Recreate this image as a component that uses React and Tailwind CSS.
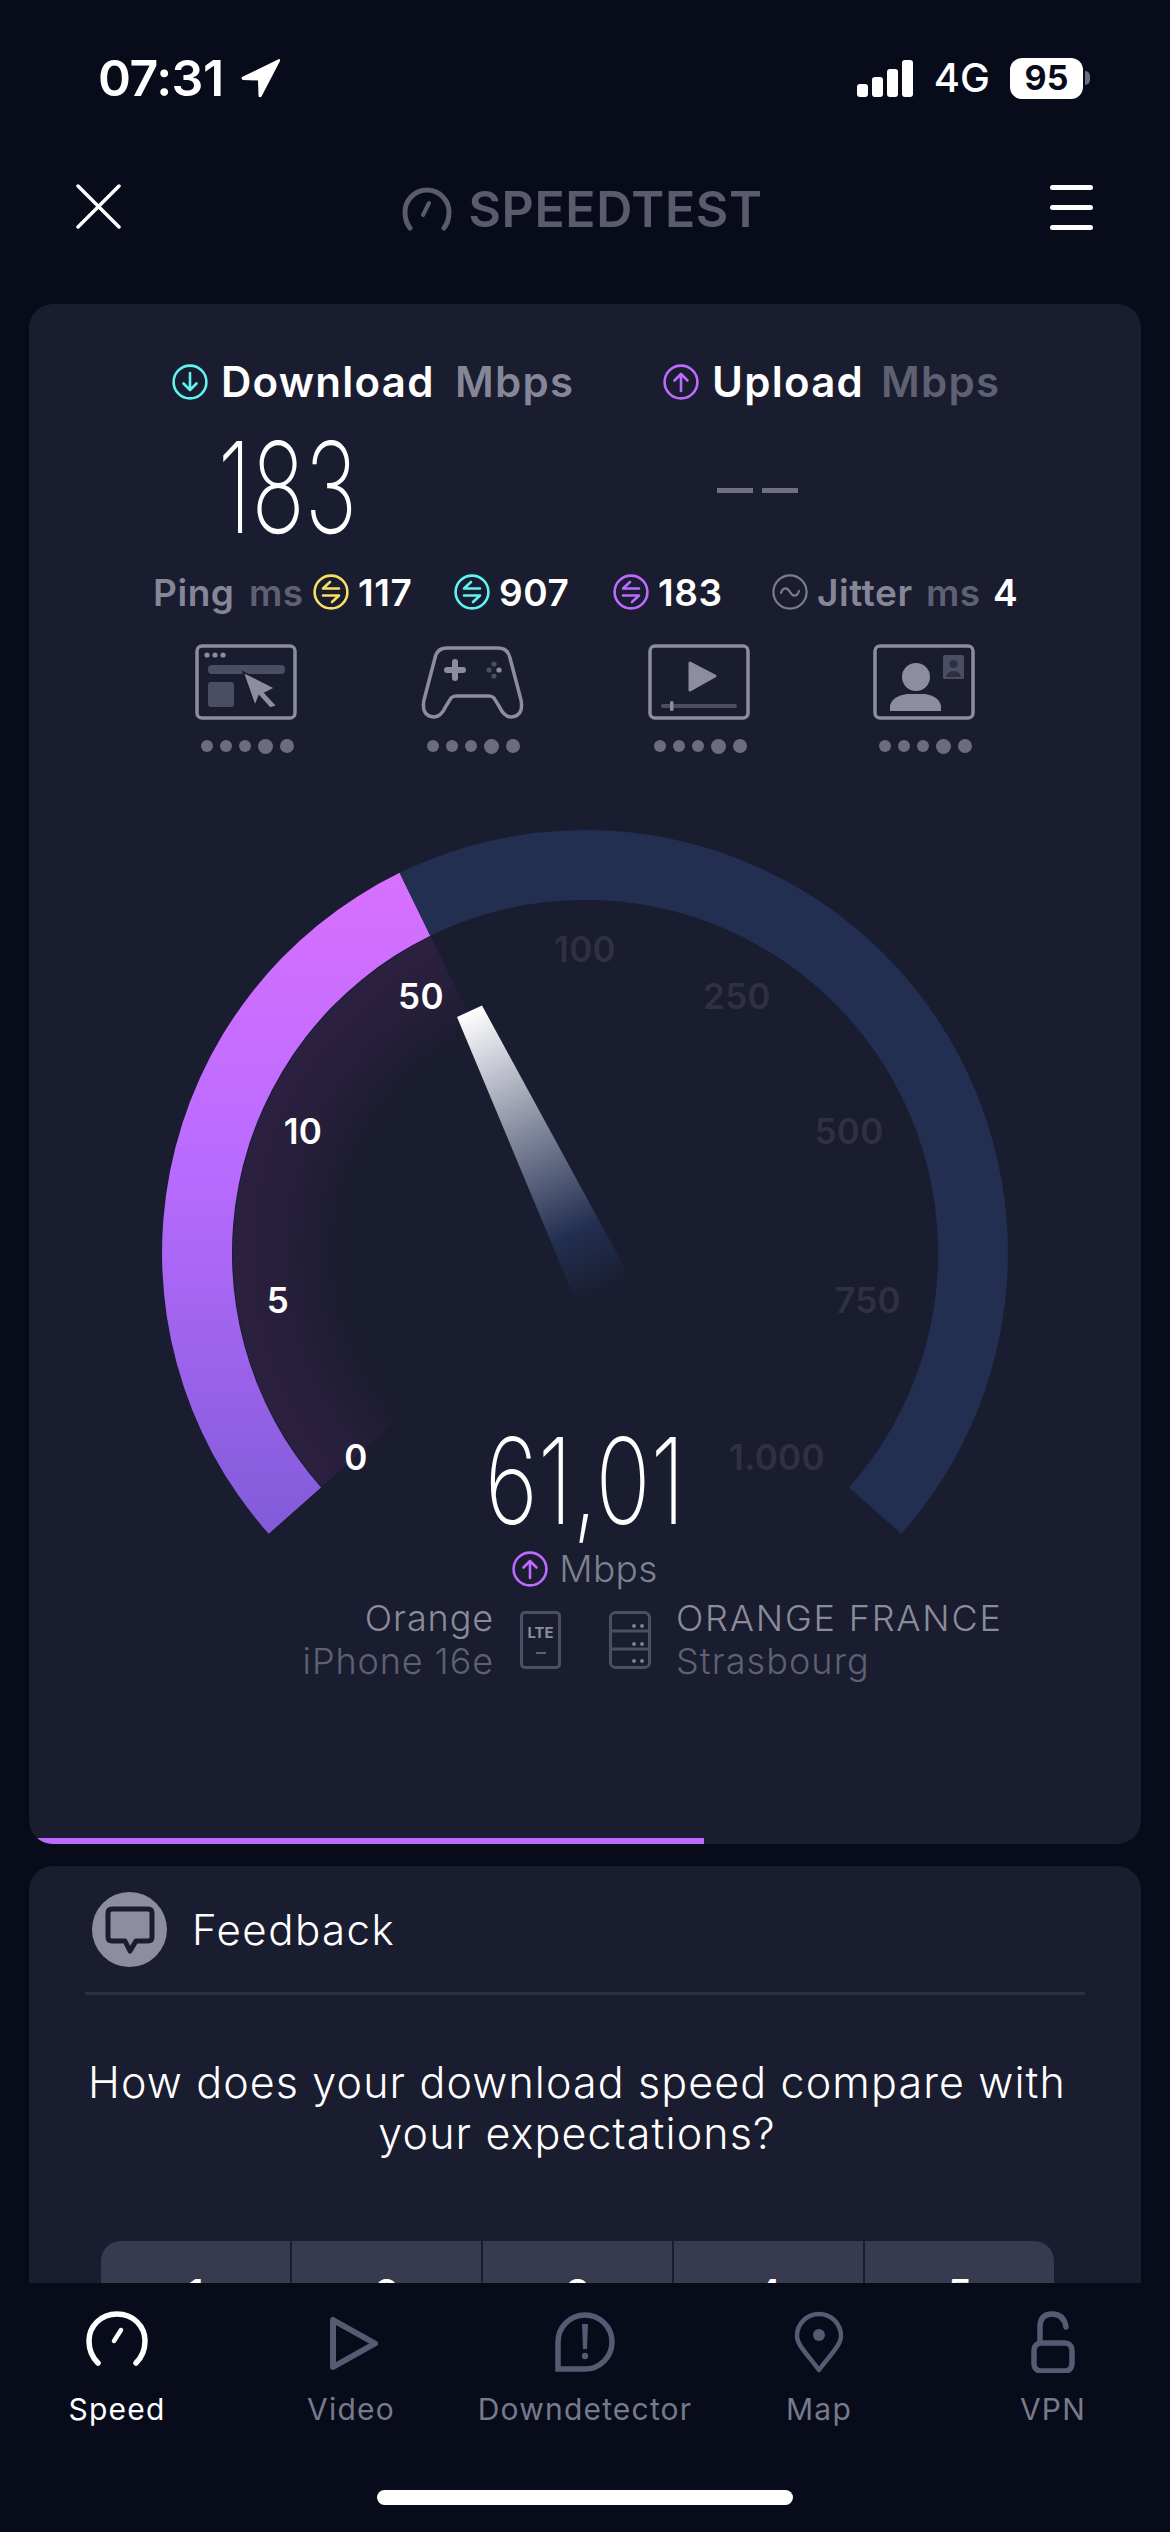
import React from "react";

const CX = 556;
const CY = 453;

function polar(r, deg) {
  const a = (deg * Math.PI) / 180;
  return `${(CX + r * Math.sin(a)).toFixed(1)} ${(CY - r * Math.cos(a)).toFixed(1)}`;
}

function band(r1, r2, from, to) {
  return `M${polar(r1, from)} A${r1} ${r1} 0 0 1 ${polar(r1, to)} L${polar(r2, to)} A${r2} ${r2} 0 0 0 ${polar(r2, from)} Z`;
}

function ArrowCircle({ color, up, size = 36 }) {
  return (
    <svg width={size} height={size} viewBox="0 0 36 36" fill="none" stroke={color} strokeWidth="2.6" className="shrink-0">
      <circle cx="18" cy="18" r="16.4" />
      {up ? <path d="M18 27V10M11.5 16.5 18 10l6.5 6.5" strokeLinecap="round" strokeLinejoin="round" /> : <path d="M18 9v17M11.5 19.5 18 26l6.5-6.5" strokeLinecap="round" strokeLinejoin="round" />}
    </svg>
  );
}

function PingIcon({ color }) {
  return (
    <svg width="36" height="36" viewBox="0 0 36 36" fill="none" stroke={color} strokeWidth="2.6" className="shrink-0">
      <circle cx="18" cy="18" r="16.4" />
      <path d="M26 14.5H10L17 8M10 21.5h16L19 28" strokeLinecap="round" strokeLinejoin="round" />
    </svg>
  );
}

function JitterIcon() {
  return (
    <svg width="36" height="36" viewBox="0 0 36 36" fill="none" stroke="#7b7d8e" strokeWidth="2.2" className="shrink-0">
      <circle cx="18" cy="18" r="16.6" />
      <path d="M9 19c2-6 6-6 9-1s7 5 9-1" strokeLinecap="round" />
    </svg>
  );
}

function Dots() {
  return (
    <div className="flex items-center gap-[7px] mt-[18px] h-[16px]">
      <span className="w-[12px] h-[12px] rounded-full bg-[#6b6d7e]" />
      <span className="w-[12px] h-[12px] rounded-full bg-[#6b6d7e]" />
      <span className="w-[12px] h-[12px] rounded-full bg-[#6b6d7e]" />
      <span className="w-[15px] h-[15px] rounded-full bg-[#6b6d7e]" />
      <span className="w-[14px] h-[14px] rounded-full bg-[#6b6d7e]" />
    </div>
  );
}

function BrowserIcon() {
  return (
    <svg width="102" height="76" viewBox="0 0 102 76" fill="none">
      <rect x="2" y="2" width="98" height="72" rx="5" stroke="#8c8da0" strokeWidth="3.5" />
      <circle cx="12" cy="11" r="2.6" fill="#8c8da0" />
      <circle cx="20" cy="11" r="2.6" fill="#8c8da0" />
      <circle cx="28" cy="11" r="2.6" fill="#8c8da0" />
      <rect x="13" y="21" width="77" height="9" rx="4" fill="#4b4d62" />
      <rect x="13" y="38" width="26" height="25" rx="3" fill="#4b4d62" />
      <path d="M48 28 80 44 70 49 82 62 75 64 64 52 60 62Z" fill="#8c8da0" stroke="#1a1c2f" strokeWidth="1.5" />
    </svg>
  );
}

function GamepadIcon() {
  return (
    <svg width="103" height="76" viewBox="0 0 103 76" fill="none">
      <path d="M26 4H77Q87 4 89 14L100 56Q103 72 90 73Q83 73 78 62L73 54Q71 52 68 52H35Q32 52 30 54L25 62Q20 73 13 73Q0 72 3 56L14 14Q16 4 26 4Z" stroke="#8c8da0" strokeWidth="3.5" />
      <path d="M34 18v16M26 26h16" stroke="#8c8da0" strokeWidth="6" strokeLinecap="round" />
      <circle cx="73" cy="20" r="2.6" fill="#4b4d62" />
      <circle cx="68" cy="26" r="2.6" fill="#4b4d62" />
      <circle cx="78" cy="26" r="2.6" fill="#8c8da0" />
      <circle cx="73" cy="32" r="2.6" fill="#4b4d62" />
    </svg>
  );
}

function VideoIcon() {
  return (
    <svg width="102" height="76" viewBox="0 0 102 76" fill="none">
      <rect x="2" y="2" width="98" height="72" rx="5" stroke="#8c8da0" strokeWidth="3.5" />
      <path d="M42 19 67 32 42 46Z" fill="#8c8da0" stroke="#8c8da0" strokeWidth="3" strokeLinejoin="round" />
      <rect x="13" y="60" width="76" height="4" rx="2" fill="#4b4d62" />
      <rect x="22" y="57" width="3.5" height="10" rx="1.5" fill="#8c8da0" />
    </svg>
  );
}

function PersonIcon() {
  return (
    <svg width="102" height="76" viewBox="0 0 102 76" fill="none">
      <rect x="2" y="2" width="98" height="72" rx="5" stroke="#8c8da0" strokeWidth="3.5" />
      <ellipse cx="43" cy="33" rx="14" ry="14" fill="#8c8da0" />
      <path d="M17 67V62Q19 52 34 50H52Q66 52 68 62V67Z" fill="#8c8da0" />
      <rect x="70" y="11" width="21" height="24" rx="1.5" fill="#4b4d62" />
      <circle cx="80.500" cy="20" r="4" fill="#1a1c2f" opacity=".6" />
      <path d="M73 33q1-6 7.500-6t7.500 6Z" fill="#1a1c2f" opacity=".6" />
    </svg>
  );
}

function ServerIcon() {
  return (
    <svg width="42" height="58" viewBox="0 0 42 58" fill="none" stroke="#4c4e63" strokeWidth="3">
      <rect x="1.500" y="1.500" width="39" height="55" rx="5" />
      <path d="M1.500 20h39M1.500 38h39" />
      <g fill="#7d7f90" stroke="none">
        <circle cx="25" cy="15" r="2" /><circle cx="33" cy="15" r="2" />
        <circle cx="25" cy="33" r="2" /><circle cx="33" cy="33" r="2" />
        <circle cx="25" cy="50" r="2" /><circle cx="33" cy="50" r="2" />
      </g>
    </svg>
  );
}

function Gauge() {
  return (
    <svg width="1112" height="900" viewBox="0 0 1112 900" className="absolute inset-0">
      <defs>
        <linearGradient id="arc" gradientUnits="userSpaceOnUse" x1="0" y1="60" x2="0" y2="735">
          <stop offset="0" stopColor="#d970ff" />
          <stop offset="0.45" stopColor="#b96bff" />
          <stop offset="1" stopColor="#815bd9" />
        </linearGradient>
        <radialGradient id="glow" gradientUnits="userSpaceOnUse" cx={CX} cy={CY} r="353">
          <stop offset="0.68" stopColor="#2c2040" stopOpacity="0" />
          <stop offset="0.85" stopColor="#2c2040" stopOpacity=".7" />
          <stop offset="1" stopColor="#2c2040" />
        </radialGradient>
        <linearGradient id="needle" gradientUnits="userSpaceOnUse" x1="440.500" y1="211" x2="576" y2="495">
          <stop offset="0" stopColor="#ffffff" />
          <stop offset="0.45" stopColor="#7c8298" />
          <stop offset="0.78" stopColor="#222f50" />
          <stop offset="1" stopColor="#1a1c2f" />
        </linearGradient>
      </defs>
      <path d={band(352, 220, -131.6, -26)} fill="url(#glow)" />
      <path d={band(423, 353, -131.6, -26)} fill="url(#arc)" />
      <path d={band(423, 353, -26, 131.6)} fill="#222f50" />
      <polygon points="428,217 453,205.500 603.500,482 550,509" fill="url(#needle)" />
    </svg>
  );
}

const ticksOn = "absolute -translate-x-1/2 -translate-y-1/2 text-[35px] leading-none font-semibold tracking-[0.01em] text-white";
const ticksOff = "absolute -translate-x-1/2 -translate-y-1/2 text-[35px] leading-none font-semibold tracking-[0.01em] text-[#2f3142]";

function TabIcon({ name, color }) {
  if (name === "speed") {
    return (
      <svg width="62" height="62" viewBox="0 0 62 62" fill="none" stroke={color} strokeWidth="5.500" strokeLinecap="round">
        <path d="M12 52C6 46 3 38 3 30 3 15 15 3 31 3s28 12 28 27c0 8-3 16-9 22" />
        <path d="M28 30l7-11" strokeWidth="4.500" />
      </svg>
    );
  }
  if (name === "video") {
    return (
      <svg width="52" height="62" viewBox="0 0 52 62" fill="none" stroke={color} strokeWidth="6" strokeLinejoin="round" className="ml-[5px]">
        <path d="M5 9V56L47 32.500Z" />
      </svg>
    );
  }
  if (name === "down") {
    return (
      <svg width="62" height="62" viewBox="0 0 62 62" fill="none" stroke={color} strokeWidth="5.500">
        <path d="M4 58V31a27 27 0 1 1 27 27Z" />
        <path d="M28 13h6l-1 25h-4Z" fill={color} stroke="none" />
        <circle cx="31" cy="45" r="3.200" fill={color} stroke="none" />
      </svg>
    );
  }
  if (name === "map") {
    return (
      <svg width="50" height="62" viewBox="0 0 50 62" fill="none" stroke={color} strokeWidth="4.500">
        <path d="M25 59C14 44 3 34 3 25a22 22 0 0 1 44 0c0 9-11 19-22 34Z" strokeLinejoin="round" />
        <circle cx="25" cy="24" r="6" fill={color} stroke="none" />
      </svg>
    );
  }
  return (
    <svg width="44" height="62" viewBox="0 0 44 62" fill="none" stroke={color} strokeWidth="5.500">
      <rect x="3" y="32" width="38" height="28" rx="7" />
      <path d="M9 32V16Q9 3 21 3t14 13" strokeLinecap="round" />
    </svg>
  );
}

function Tab({ name, label, active }) {
  return (
    <div className="w-[234px] flex flex-col items-center">
      <div className="h-[62px] flex items-end">
        <TabIcon name={name} color={active ? "#ffffff" : "#585a73"} />
      </div>
      <span className={`mt-[16px] text-[30px] leading-[40px] tracking-[0.04em] ${active ? "text-white" : "text-[#777a8b]"}`}>{label}</span>
    </div>
  );
}

export default function App() {
  return (
    <div className="w-[1170px] h-[2532px] bg-[#080b1a] flex flex-col overflow-hidden [font-family:Inter,sans-serif] text-white">
      {/* status bar */}
      <div className="h-[156px] shrink-0 flex items-center justify-between pl-[98px] pr-[80px]">
        <div className="flex items-center gap-[17px]">
          <span className="text-[50px] leading-none font-semibold tracking-[-0.01em]">07:31</span>
          <svg width="40" height="40" viewBox="0 0 40 40" fill="#ffffff">
            <path d="M38 1 1 19c-1 1 0 3 1 3l15 .5.500 15c0 2 2 2 3 1L39 3c.500-1-.500-2.500-1-2Z" />
          </svg>
        </div>
        <div className="flex items-center">
          <div className="flex items-end gap-[4px] h-[37px]">
            <span className="w-[11px] h-[13px] rounded-[3px] bg-white" />
            <span className="w-[11px] h-[20px] rounded-[3px] bg-white" />
            <span className="w-[11px] h-[28px] rounded-[3px] bg-white" />
            <span className="w-[11px] h-[37px] rounded-[3px] bg-white" />
          </div>
          <span className="ml-[21px] text-[40px] leading-none font-medium">4G</span>
          <div className="ml-[20px] w-[73px] h-[41px] rounded-[12px] bg-white flex items-center justify-center text-[#080b1a] text-[34px] font-bold leading-none">95</div>
          <span className="ml-[2px] w-[5px] h-[14px] rounded-r-full bg-[#6b6d7e]" />
        </div>
      </div>

      {/* header */}
      <div className="h-[148px] shrink-0 flex items-start justify-between pt-[28px] pl-[76px] pr-[77px]">
        <svg width="45" height="45" viewBox="0 0 45 45" stroke="#ffffff" strokeWidth="3.500" strokeLinecap="round">
          <path d="M2 2 43 43M43 2 2 43" />
        </svg>
        <div className="flex items-center gap-[16px] -ml-[6px]">
          <svg width="50" height="44" viewBox="0 0 50 44" fill="none" stroke="#5a5c6e" strokeWidth="5" strokeLinecap="round">
            <path d="M8 41C4 36 3 30 3 25 3 13 13 3 25 3s22 10 22 22c0 5-1 11-5 16" />
            <path d="M21 28l6-12" strokeWidth="4" />
          </svg>
          <span className="text-[50px] leading-none font-semibold text-[#5a5c6e] tracking-[0.012em]">SPEEDTEST</span>
        </div>
        <div className="flex flex-col gap-[15px] pt-[1px]">
          <span className="w-[43px] h-[5px] rounded-full bg-white" />
          <span className="w-[43px] h-[5px] rounded-full bg-white" />
          <span className="w-[43px] h-[5px] rounded-full bg-white" />
        </div>
      </div>

      {/* scrolling content, cut by the tab bar */}
      <div className="flex-1 min-h-0 overflow-hidden px-[29px] flex flex-col gap-[22px]">
        <div className="relative shrink-0 h-[1540px] rounded-[24px] bg-[#1a1c2f] overflow-hidden">
          <div className="pt-[60px] pl-[143px] flex items-center h-[96px] text-[42px] leading-none font-semibold tracking-[0.03em]">
            <ArrowCircle color="#5ff5ee" />
            <span className="ml-[13px] w-[234px]">Download</span>
            <span className="w-[208px] text-[#858799]">Mbps</span>
            <ArrowCircle color="#bd6bff" up />
            <span className="ml-[13px] w-[169px]">Upload</span>
            <span className="text-[#5f6173]">Mbps</span>
          </div>

          <div className="h-[174px] pl-[143px] flex items-center">
            <div className="w-[230px] flex justify-center">
              <span className="inline-block scale-x-[.7] text-[126px] leading-none font-extralight">183</span>
            </div>
            <div className="ml-[238px] w-[234px] flex justify-center gap-[9px] pt-[6px]">
              <span className="w-[36px] h-[5px] bg-[#6f7080]" />
              <span className="w-[36px] h-[5px] bg-[#6f7080]" />
            </div>
          </div>

          <div className="h-[36px] pl-[124px] flex items-center text-[37px] leading-none font-semibold tracking-[0.015em]">
            <span className="w-[96px] text-[#858799]">Ping</span>
            <span className="w-[64px] text-[#5f6173]">ms</span>
            <PingIcon color="#f7e063" />
            <span className="ml-[9px] w-[96px]">117</span>
            <PingIcon color="#5ff5ee" />
            <span className="ml-[9px] w-[114px]">907</span>
            <PingIcon color="#bd6bff" />
            <span className="ml-[9px] w-[114px]">183</span>
            <JitterIcon />
            <span className="ml-[9px] w-[109px] text-[#858799]">Jitter</span>
            <span className="w-[67px] text-[#5f6173]">ms</span>
            <span>4</span>
          </div>

          <div className="mt-[34px] pl-[166px] flex">
            <div className="w-[226px] flex flex-col items-start">
              <BrowserIcon />
              <div className="ml-[6px]"><Dots /></div>
            </div>
            <div className="w-[227px] flex flex-col items-start">
              <GamepadIcon />
              <div className="ml-[6px]"><Dots /></div>
            </div>
            <div className="w-[225px] flex flex-col items-start">
              <VideoIcon />
              <div className="ml-[6px]"><Dots /></div>
            </div>
            <div className="flex flex-col items-start">
              <PersonIcon />
              <div className="ml-[6px]"><Dots /></div>
            </div>
          </div>

          {/* gauge */}
          <div className="absolute left-0 top-[496px] w-[1112px] h-[900px]">
            <Gauge />
            <span className={`${ticksOff} left-[556px] top-[149px]`}>100</span>
            <span className={`${ticksOff} left-[708px] top-[196px]`}>250</span>
            <span className={`${ticksOff} left-[820px] top-[331px]`}>500</span>
            <span className={`${ticksOff} left-[839px] top-[500px]`}>750</span>
            <span className={`${ticksOff} left-[748px] top-[657px]`}>1.000</span>
            <span className={`${ticksOn} left-[327px] top-[657px]`}>0</span>
            <span className={`${ticksOn} left-[249px] top-[500px]`}>5</span>
            <span className={`${ticksOn} left-[274px] top-[331px]`}>10</span>
            <span className={`${ticksOn} left-[392px] top-[196px]`}>50</span>

            <div className="relative flex flex-col items-center pt-[621px]">
              <span className="inline-block scale-x-[.76] text-[120px] leading-[120px] font-extralight">61,01</span>
              <div className="mt-[9px] flex items-center gap-[11px]">
                <ArrowCircle color="#bd6bff" up />
                <span className="text-[37px] leading-none font-light tracking-[0.01em] text-[#7d8190]">Mbps</span>
              </div>
              <div className="mt-[10px] w-full flex items-center">
                <div className="w-[465px] text-right text-[36px] leading-[43px] font-light tracking-[0.025em]">
                  <div className="text-[#8a8b9b]">Orange</div>
                  <div className="text-[#5f6173]">iPhone 16e</div>
                </div>
                <div className="ml-[26px] w-[41px] h-[58px] rounded-[5px] border-[3px] border-[#4c4e63] flex flex-col items-center pt-[11px]">
                  <span className="text-[15px] leading-none font-bold text-[#8a8b9b]">LTE</span>
                  <span className="mt-[12px] w-[10px] h-[2px] bg-[#5f6173]" />
                </div>
                <div className="ml-[48px]"><ServerIcon /></div>
                <div className="ml-[25px] text-[36px] leading-[43px] font-light tracking-[0.03em]">
                  <div className="text-[#8a8b9b] tracking-[0.05em]">ORANGE FRANCE</div>
                  <div className="text-[#5f6173]">Strasbourg</div>
                </div>
              </div>
            </div>
          </div>

          <div className="absolute left-0 bottom-0 w-[675px] h-[6px] bg-[#bd6bff]" />
        </div>

        {/* feedback */}
        <div className="shrink-0 h-[600px] rounded-[24px] bg-[#1a1c2f] pt-[26px] px-[56px] flex flex-col">
          <div className="pl-[7px] flex items-center gap-[25px]">
            <div className="w-[75px] h-[75px] rounded-full bg-[#8c8d9f] flex items-center justify-center">
              <svg width="50" height="48" viewBox="0 0 50 48" fill="#8c8d9f" stroke="#1a1c2f" strokeWidth="5" strokeLinejoin="round">
                <path d="M7 3H43Q47 3 47 7V31Q47 35 43 35H31L25 45 20 35H7Q3 35 3 31V7Q3 3 7 3Z" />
              </svg>
            </div>
            <span className="text-[42px] leading-none font-light tracking-[0.035em]">Feedback</span>
          </div>
          <div className="mt-[25px] h-[3px] bg-[#2e3042]" />
          <p className="mt-[62px] -ml-[38px] -mr-[22px] text-center text-[43px] leading-[51px] font-light tracking-[0.026em]">
            How does your download speed compare with<br />your expectations?
          </p>
          <div className="mt-[82px] ml-[16px] w-[953px] h-[120px] rounded-[20px] overflow-hidden flex gap-[2px]">
            <div className="flex-1 bg-[#383a50] pt-[33px] text-center text-[40px] font-medium leading-none">1</div>
            <div className="flex-1 bg-[#383a50] pt-[33px] text-center text-[40px] font-medium leading-none">2</div>
            <div className="flex-1 bg-[#383a50] pt-[33px] text-center text-[40px] font-medium leading-none">3</div>
            <div className="flex-1 bg-[#383a50] pt-[33px] text-center text-[40px] font-medium leading-none">4</div>
            <div className="flex-1 bg-[#383a50] pt-[33px] text-center text-[40px] font-medium leading-none">5</div>
          </div>
        </div>
      </div>

      {/* tab bar */}
      <div className="h-[249px] shrink-0 flex flex-col">
        <div className="pt-[28px] flex">
          <Tab name="speed" label="Speed" active />
          <Tab name="video" label="Video" />
          <Tab name="down" label="Downdetector" />
          <Tab name="map" label="Map" />
          <Tab name="vpn" label="VPN" />
        </div>
        <div className="mt-[61px] mx-auto w-[416px] h-[15px] rounded-full bg-white" />
      </div>
    </div>
  );
}
